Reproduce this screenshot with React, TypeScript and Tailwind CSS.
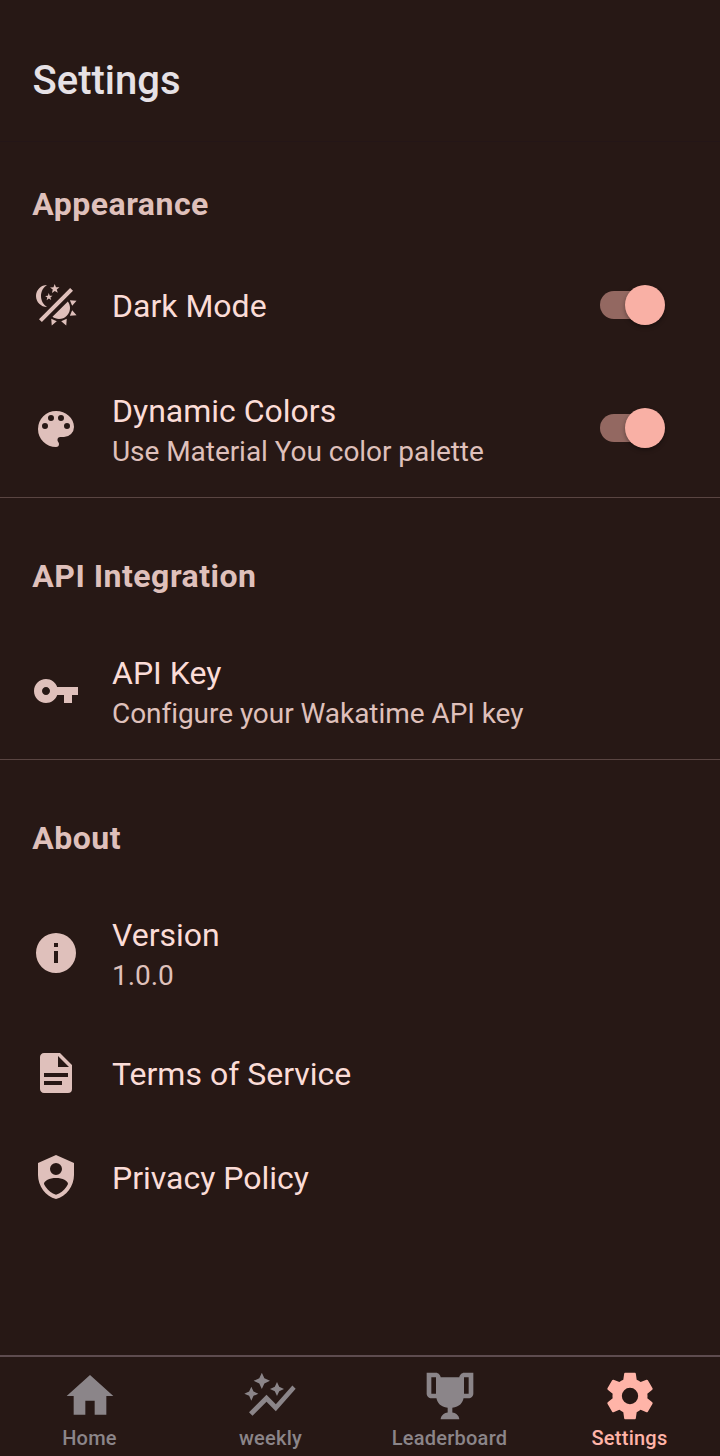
import type { ReactNode } from "react";

const icons = {
  theme:
    "M7.5,2C5.71,3.15 4.5,5.18 4.5,7.5C4.5,9.82 5.71,11.85 7.53,13C4.46,13 2,10.54 2,7.5A5.5,5.5 0 0,1 7.5,2M19.07,3.5L20.5,4.93L4.93,20.5L3.5,19.07L19.07,3.5M12.89,5.93L11.41,5L9.97,6L10.39,4.3L9,3.24L10.75,3.12L11.33,1.47L12,3.1L13.73,3.13L12.38,4.26L12.89,5.93M9.59,9.54L8.43,8.81L7.31,9.59L7.65,8.27L6.56,7.44L7.92,7.35L8.37,6.06L8.88,7.33L10.24,7.36L9.19,8.23L9.59,9.54M19,13.5A5.5,5.5 0 0,1 13.5,19C12.28,19 11.15,18.6 10.24,17.93L17.93,10.24C18.6,11.15 19,12.28 19,13.5M14.6,20.08L17.37,18.93L17.13,22.28L14.6,20.08M18.93,17.38L20.08,14.61L22.28,17.15L18.93,17.38M20.08,12.42L18.94,9.64L22.28,9.88L20.08,12.42M9.63,18.93L12.4,20.08L9.87,22.27L9.63,18.93Z",
  palette:
    "M17.5,12A1.5,1.5 0 0,1 16,10.5A1.5,1.5 0 0,1 17.5,9A1.5,1.5 0 0,1 19,10.5A1.5,1.5 0 0,1 17.5,12M14.5,8A1.5,1.5 0 0,1 13,6.5A1.5,1.5 0 0,1 14.5,5A1.5,1.5 0 0,1 16,6.5A1.5,1.5 0 0,1 14.5,8M9.5,8A1.5,1.5 0 0,1 8,6.5A1.5,1.5 0 0,1 9.5,5A1.5,1.5 0 0,1 11,6.5A1.5,1.5 0 0,1 9.5,8M6.5,12A1.5,1.5 0 0,1 5,10.5A1.5,1.5 0 0,1 6.5,9A1.5,1.5 0 0,1 8,10.5A1.5,1.5 0 0,1 6.5,12M12,3A9,9 0 0,0 3,12A9,9 0 0,0 12,21A1.5,1.5 0 0,0 13.5,19.5C13.5,19.11 13.35,18.76 13.11,18.5C12.88,18.23 12.73,17.88 12.73,17.5A1.5,1.5 0 0,1 14.23,16H16A5,5 0 0,0 21,11C21,6.58 16.97,3 12,3Z",
  key: "M7 14C5.9 14 5 13.1 5 12S5.9 10 7 10 9 10.9 9 12 8.1 14 7 14M12.6 10C11.8 7.7 9.6 6 7 6C3.7 6 1 8.7 1 12S3.7 18 7 18C9.6 18 11.8 16.3 12.6 14H16V18H20V14H23V10H12.6Z",
  info: "M13,9H11V7H13M13,17H11V11H13M12,2A10,10 0 0,0 2,12A10,10 0 0,0 12,22A10,10 0 0,0 22,12A10,10 0 0,0 12,2Z",
  file: "M13,9H18.5L13,3.5V9M6,2H14L20,8V20A2,2 0 0,1 18,22H6C4.89,22 4,21.1 4,20V4C4,2.89 4.89,2 6,2M15,18V16H6V18H15M18,14V12H6V14H18Z",
  shield:
    "M12,1L3,5V11C3,16.55 6.84,21.74 12,23C17.16,21.74 21,16.55 21,11V5L12,1M12,5A3,3 0 0,1 15,8A3,3 0 0,1 12,11A3,3 0 0,1 9,8A3,3 0 0,1 12,5M17.13,17C15.92,18.85 14.11,20.24 12,20.92C9.89,20.24 8.08,18.85 6.87,17C6.53,16.5 6.24,16 6,15.47C6,13.82 8.71,12.47 12,12.47C15.29,12.47 18,13.79 18,15.47C17.76,16 17.47,16.5 17.13,17Z",
  home: "M10,20V14H14V20H19V12H22L12,3L2,12H5V20H10Z",
  graph:
    "M14.06 9.94L12 9l2.06-.94L15 6l.94 2.06L18 9l-2.06.94L15 12l-.94-2.06zM4 14l.94-2.06L7 11l-2.06-.94L4 8l-.94 2.06L1 11l2.06.94L4 14zM8.5 9l1.09-2.41L12 5.5 9.59 4.41 8.5 2 7.41 4.41 5 5.5l2.41 1.09L8.5 9zM4.5 20.5l6-6.01 4 4L23 8.93l-1.41-1.41-7.09 7.97-4-4L3 19l1.5 1.5z",
  trophy:
    "M18 2C17.1 2 16 3 16 4H8C8 3 6.9 2 6 2H2V11C2 12 3 13 4 13H6.2C6.6 15 7.9 16.7 11 17V19.08C8 19.54 8 22 8 22H16C16 22 16 19.54 13 19.08V17C16.1 16.7 17.4 15 17.8 13H20C21 13 22 12 22 11V2H18M6 11H4V4H6V11M20 11H18V4H20V11Z",
  cog: "M12,15.5A3.5,3.5 0 0,1 8.5,12A3.5,3.5 0 0,1 12,8.5A3.5,3.5 0 0,1 15.5,12A3.5,3.5 0 0,1 12,15.5M19.43,12.97C19.47,12.65 19.5,12.33 19.5,12C19.5,11.67 19.47,11.34 19.43,11L21.54,9.37C21.73,9.22 21.78,8.95 21.66,8.73L19.66,5.27C19.54,5.05 19.27,4.96 19.05,5.05L16.56,6.05C16.04,5.66 15.5,5.32 14.87,5.07L14.5,2.42C14.46,2.18 14.25,2 14,2H10C9.75,2 9.54,2.18 9.5,2.42L9.13,5.07C8.5,5.32 7.96,5.66 7.44,6.05L4.95,5.05C4.73,4.96 4.46,5.05 4.34,5.27L2.34,8.73C2.21,8.95 2.27,9.22 2.46,9.37L4.57,11C4.53,11.34 4.5,11.67 4.5,12C4.5,12.33 4.53,12.65 4.57,12.97L2.46,14.63C2.27,14.78 2.21,15.05 2.34,15.27L4.34,18.73C4.46,18.95 4.73,19.03 4.95,18.95L7.44,17.94C7.96,18.34 8.5,18.68 9.13,18.93L9.5,21.58C9.54,21.82 9.75,22 10,22H14C14.25,22 14.46,21.82 14.5,21.58L14.87,18.93C15.5,18.67 16.04,18.34 16.56,17.94L19.05,18.95C19.27,19.03 19.54,18.95 19.66,18.73L21.66,15.27C21.78,15.05 21.73,14.78 21.54,14.63L19.43,12.97Z",
};

type IconName = keyof typeof icons;

function Icon({ name, className }: { name: IconName; className: string }) {
  return (
    <svg viewBox="0 0 24 24" fill="currentColor" className={className} aria-hidden="true">
      <path d={icons[name]} />
    </svg>
  );
}

function Toggle() {
  return (
    <button
      role="switch"
      aria-checked="true"
      className="flex h-7 w-[65px] items-center justify-end rounded-full bg-linear-to-r from-[#936861] from-80% to-transparent to-80%"
    >
      <span className="size-10 shrink-0 rounded-full bg-[#f9b0a5] shadow-[0_2px_4px_rgba(0,0,0,0.35)]" />
    </button>
  );
}

function Section({ title, children }: { title: string; children: ReactNode }) {
  return (
    <section className="border-b border-[#5a4542] last:border-b-0">
      <h2 className="flex h-[123px] items-center pt-[33px] pl-[32.25px] text-[32px] font-bold tracking-[0.5px] text-[#dfc0bb]">
        {title}
      </h2>
      {children}
    </section>
  );
}

type RowProps = { icon: IconName; title: string; description?: string; toggle?: boolean };

function Row({ icon, title, description, toggle }: RowProps) {
  if (description) {
    return (
      <div className="flex h-[138px] items-center pr-[55px] pl-8">
        <Icon name={icon} className="mt-[2px] mr-8 size-12 shrink-0 text-[#dfc0bb]" />
        <div className="flex grow flex-col pt-[7px]">
          <span className="text-[32px] leading-10 text-[#fbdcd7]">{title}</span>
          <span className="text-[28px] leading-[41px] tracking-[-0.05px] text-[#dfc0bb]">{description}</span>
        </div>
        {toggle && <Toggle />}
      </div>
    );
  }
  return (
    <div className="flex h-[104px] items-center pr-[55px] pl-8">
      <Icon name={icon} className="mr-8 size-12 shrink-0 text-[#dfc0bb]" />
      <span className="grow pt-[2px] text-[32px] leading-10 text-[#fbdcd7]">{title}</span>
      {toggle && <Toggle />}
    </div>
  );
}

const tabs: { icon: IconName; label: string; active?: boolean }[] = [
  { icon: "home", label: "Home" },
  { icon: "graph", label: "weekly" },
  { icon: "trophy", label: "Leaderboard" },
  { icon: "cog", label: "Settings", active: true },
];

export default function App() {
  return (
    <div className="flex h-[1456px] w-[720px] flex-col overflow-hidden bg-[#271815] font-['Roboto',sans-serif]">
      <header className="flex h-[142px] shrink-0 items-center border-b border-[#241617] pt-5 pl-[32.5px]">
        <h1 className="text-[40px] font-medium text-[#e6e1e5]">Settings</h1>
      </header>
      <main className="-mt-4 grow">
        <Section title="Appearance">
          <div className="flex flex-col gap-[2px] pt-1">
            <Row icon="theme" title="Dark Mode" toggle />
            <Row icon="palette" title="Dynamic Colors" description="Use Material You color palette" toggle />
          </div>
        </Section>
        <Section title="API Integration">
          <Row icon="key" title="API Key" description="Configure your Wakatime API key" />
        </Section>
        <Section title="About">
          <Row icon="info" title="Version" description="1.0.0" />
          <Row icon="file" title="Terms of Service" />
          <Row icon="shield" title="Privacy Policy" />
        </Section>
      </main>
      <nav className="grid h-[101px] shrink-0 grid-cols-4 border-t-2 border-[#5e4c4f]">
        {tabs.map((tab) => (
          <a
            key={tab.label}
            className={
              tab.active
                ? "flex flex-col items-center pt-[11px] text-[#ffb4a8]"
                : "flex flex-col items-center pt-[11px] text-[#8b8589]"
            }
          >
            <Icon name={tab.icon} className="size-14" />
            <span
              className={
                tab.label === "weekly"
                  ? "ml-[1px] text-[20px] leading-7 font-medium tracking-[0.25px]"
                  : "-ml-[1px] text-[20px] leading-7 font-medium tracking-[0.25px]"
              }
            >
              {tab.label}
            </span>
          </a>
        ))}
      </nav>
    </div>
  );
}
